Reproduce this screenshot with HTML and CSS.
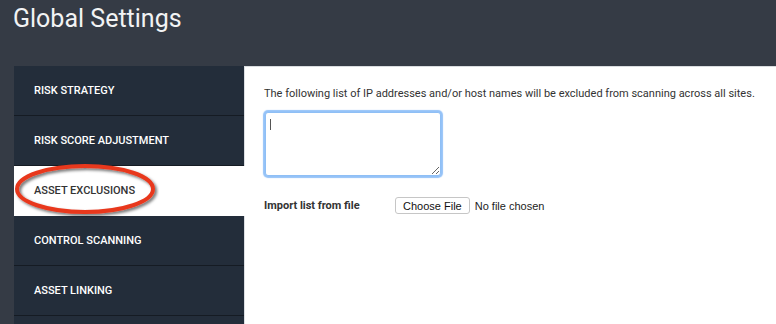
FILE: index.html
```html
<!DOCTYPE html>
<html lang="en">

<head>
    <meta charset="UTF-8">
    <meta name="viewport" content="width=device-width, initial-scale=1.0">
    <title>Global Settings</title>
    <link rel="stylesheet" href="styles.css">
</head>

<body>
    <header class="page-header">
        <h1>Global Settings</h1>
    </header>

    <div class="layout">
        <nav class="side-nav">
            <a class="nav-item" href="#">Risk Strategy</a>
            <a class="nav-item" href="#">Risk Score Adjustment</a>
            <a class="nav-item active" href="#">
                Asset Exclusions
                <svg class="highlight" viewBox="0 0 145 54" width="145" height="54">
                    <defs>
                        <filter id="ringShadow" x="-10%" y="-20%" width="120%" height="150%">
                            <feDropShadow dx="2" dy="2" stdDeviation="1.5" flood-color="#000" flood-opacity="0.55" />
                        </filter>
                    </defs>
                    <ellipse cx="71" cy="26" rx="68" ry="23" fill="none" stroke="#e8381f" stroke-width="4" filter="url(#ringShadow)" />
                </svg>
            </a>
            <a class="nav-item" href="#">Control Scanning</a>
            <a class="nav-item" href="#">Asset Linking</a>
            <a class="nav-item" href="#"></a>
        </nav>

        <main class="panel">
            <p class="intro">The following list of IP addresses and/or host names will be excluded from scanning across all sites.</p>
            <div class="field">
                <textarea class="exclusions"></textarea>
                <span class="caret"></span>
            </div>

            <div class="import-row">
                <label class="import-label" for="importFile">Import list from file</label>
                <input type="file" id="importFile">
            </div>
        </main>
    </div>
</body>

</html>
```

FILE: styles.css
```css
body {
    margin: 0;
    background-color: #353b45;
    font-family: 'Roboto', 'Liberation Sans', sans-serif;
    overflow: hidden;
}

.page-header {
    height: 66px;
}

.page-header h1 {
    margin: 0;
    padding: 4px 0 0 13px;
    font-size: 25px;
    line-height: 30px;
    font-weight: 400;
    color: #f2f3f4;
}

.layout {
    display: flex;
    padding-left: 14px;
    height: 258px;
    overflow: hidden;
}

.side-nav {
    width: 230px;
    flex-shrink: 0;
    display: flex;
    flex-direction: column;
    background-color: #232d3a;
}

.nav-item {
    display: flex;
    align-items: center;
    height: 49px;
    flex-shrink: 0;
    padding-left: 20px;
    border-bottom: 1px solid #151b23;
    color: #ffffff;
    font-size: 11px;
    font-weight: 500;
    text-transform: uppercase;
    text-decoration: none;
}

.nav-item.active {
    position: relative;
    z-index: 1;
    margin-right: -1px;
    background-color: #ffffff;
    color: #333333;
    border-bottom-color: #ffffff;
}

.highlight {
    position: absolute;
    left: 0;
    top: -3px;
}

.panel {
    flex: 1;
    background-color: #ffffff;
    border-left: 1px solid #dcdfe3;
    border-top: 1px solid #d9dcdf;
    padding: 20px 0 0 19px;
}

.intro {
    margin: 0 0 11px;
    font-size: 11px;
    line-height: 14px;
    color: #333333;
}

.field {
    position: relative;
    width: 178px;
}

.exclusions {
    display: block;
    width: 176px;
    height: 64px;
    margin: 0 0 0 1px;
    padding: 4px 5px;
    box-sizing: border-box;
    border: 1px solid #8fbff5;
    border-radius: 3px;
    outline: none;
    box-shadow: 0 0 1px 2px #94c2f8;
    resize: vertical;
    font-family: inherit;
    font-size: 11px;
}

.caret {
    position: absolute;
    left: 6px;
    top: 7px;
    width: 1px;
    height: 11px;
    background-color: #555555;
}

.import-row {
    display: flex;
    align-items: center;
    margin-top: 21px;
}

.import-label {
    width: 131px;
    font-size: 11px;
    font-weight: 700;
    color: #333333;
}

input[type="file"] {
    font-family: 'Liberation Sans', sans-serif;
    font-size: 11px;
    color: #222222;
}

input[type="file"]::file-selector-button {
    height: 17px;
    margin-right: 5px;
    padding: 0 7px;
    border: 1px solid #c6c6c6;
    border-radius: 3px;
    background-color: #ffffff;
    font-family: 'Liberation Sans', sans-serif;
    font-size: 11px;
    color: #111111;
}
```
